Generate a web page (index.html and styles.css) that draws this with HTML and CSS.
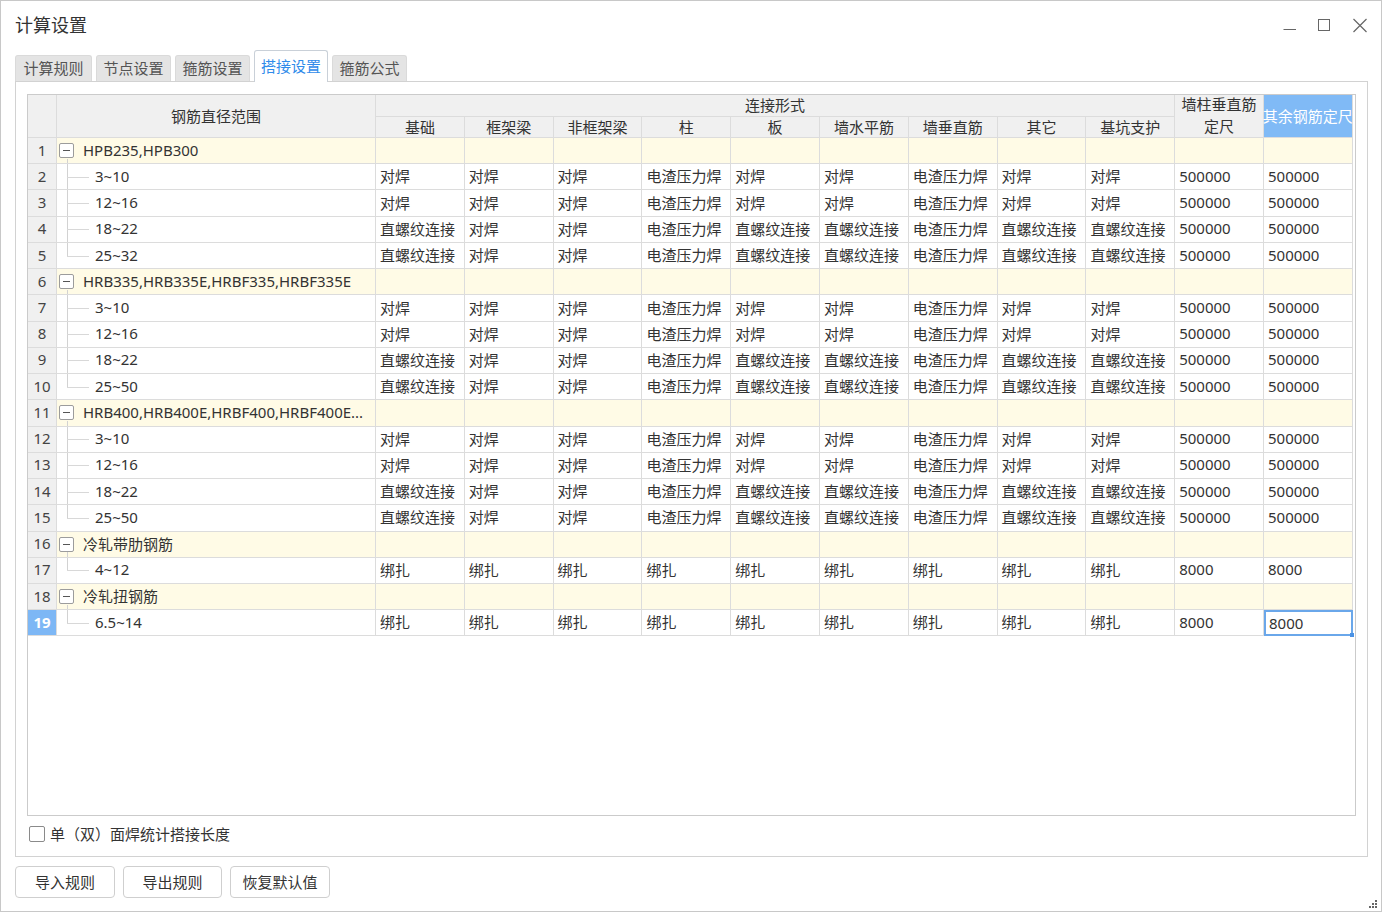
FILE: index.html
```html
<!DOCTYPE html>
<html lang="zh-CN">
<head>
<meta charset="utf-8">
<title>计算设置</title>
<link rel="stylesheet" href="styles.css">
</head>
<body>
<div class="window">
  <div class="titlebar">
    <div class="title">计算设置</div>
    <div class="controls">
      <svg class="ctl" width="16" height="16" viewBox="0 0 16 16"><line x1="1.5" y1="11.5" x2="14" y2="11.5" stroke="#666" stroke-width="1"/></svg>
      <svg class="ctl" width="16" height="16" viewBox="0 0 16 16"><rect x="1.5" y="1.5" width="11" height="11" fill="none" stroke="#666" stroke-width="1"/></svg>
      <svg class="ctl" width="16" height="16" viewBox="0 0 16 16"><path d="M1.5 1 L14.5 14 M14.5 1 L1.5 14" stroke="#666" stroke-width="1.2" fill="none"/></svg>
    </div>
  </div>
  <div class="tabs">
    <div class="tab w77">计算规则</div>
    <div class="tab w75">节点设置</div>
    <div class="tab w75">箍筋设置</div>
    <div class="tab on w74">搭接设置</div>
    <div class="tab w75">箍筋公式</div>
  </div>
  <div class="panel">
    <div class="grid">
      <div class="c h hn"></div>
      <div class="c h hname">钢筋直径范围</div>
      <div class="c h hgrp">连接形式</div>
      <div class="c h hw"><span>墙柱垂直筋</span><span>定尺</span></div>
      <div class="c h hs">其余钢筋定尺</div>
      <div class="c h">基础</div><div class="c h">框架梁</div><div class="c h">非框架梁</div><div class="c h">柱</div><div class="c h">板</div><div class="c h">墙水平筋</div><div class="c h">墙垂直筋</div><div class="c h">其它</div><div class="c h">基坑支护</div>

      <div class="c n">1</div><div class="c g nm gp"><i class="tb"></i>HPB235,HPB300</div><div class="c g"></div><div class="c g"></div><div class="c g"></div><div class="c g"></div><div class="c g"></div><div class="c g"></div><div class="c g"></div><div class="c g"></div><div class="c g"></div><div class="c g"></div><div class="c g"></div>
      <div class="c n">2</div><div class="c nm ch">3~10</div><div class="c">对焊</div><div class="c">对焊</div><div class="c">对焊</div><div class="c">电渣压力焊</div><div class="c">对焊</div><div class="c">对焊</div><div class="c">电渣压力焊</div><div class="c">对焊</div><div class="c">对焊</div><div class="c">500000</div><div class="c">500000</div>
      <div class="c n">3</div><div class="c nm ch">12~16</div><div class="c">对焊</div><div class="c">对焊</div><div class="c">对焊</div><div class="c">电渣压力焊</div><div class="c">对焊</div><div class="c">对焊</div><div class="c">电渣压力焊</div><div class="c">对焊</div><div class="c">对焊</div><div class="c">500000</div><div class="c">500000</div>
      <div class="c n">4</div><div class="c nm ch">18~22</div><div class="c">直螺纹连接</div><div class="c">对焊</div><div class="c">对焊</div><div class="c">电渣压力焊</div><div class="c">直螺纹连接</div><div class="c">直螺纹连接</div><div class="c">电渣压力焊</div><div class="c">直螺纹连接</div><div class="c">直螺纹连接</div><div class="c">500000</div><div class="c">500000</div>
      <div class="c n">5</div><div class="c nm ch last">25~32</div><div class="c">直螺纹连接</div><div class="c">对焊</div><div class="c">对焊</div><div class="c">电渣压力焊</div><div class="c">直螺纹连接</div><div class="c">直螺纹连接</div><div class="c">电渣压力焊</div><div class="c">直螺纹连接</div><div class="c">直螺纹连接</div><div class="c">500000</div><div class="c">500000</div>

      <div class="c n">6</div><div class="c g nm gp"><i class="tb"></i>HRB335,HRB335E,HRBF335,HRBF335E</div><div class="c g"></div><div class="c g"></div><div class="c g"></div><div class="c g"></div><div class="c g"></div><div class="c g"></div><div class="c g"></div><div class="c g"></div><div class="c g"></div><div class="c g"></div><div class="c g"></div>
      <div class="c n">7</div><div class="c nm ch">3~10</div><div class="c">对焊</div><div class="c">对焊</div><div class="c">对焊</div><div class="c">电渣压力焊</div><div class="c">对焊</div><div class="c">对焊</div><div class="c">电渣压力焊</div><div class="c">对焊</div><div class="c">对焊</div><div class="c">500000</div><div class="c">500000</div>
      <div class="c n">8</div><div class="c nm ch">12~16</div><div class="c">对焊</div><div class="c">对焊</div><div class="c">对焊</div><div class="c">电渣压力焊</div><div class="c">对焊</div><div class="c">对焊</div><div class="c">电渣压力焊</div><div class="c">对焊</div><div class="c">对焊</div><div class="c">500000</div><div class="c">500000</div>
      <div class="c n">9</div><div class="c nm ch">18~22</div><div class="c">直螺纹连接</div><div class="c">对焊</div><div class="c">对焊</div><div class="c">电渣压力焊</div><div class="c">直螺纹连接</div><div class="c">直螺纹连接</div><div class="c">电渣压力焊</div><div class="c">直螺纹连接</div><div class="c">直螺纹连接</div><div class="c">500000</div><div class="c">500000</div>
      <div class="c n">10</div><div class="c nm ch last">25~50</div><div class="c">直螺纹连接</div><div class="c">对焊</div><div class="c">对焊</div><div class="c">电渣压力焊</div><div class="c">直螺纹连接</div><div class="c">直螺纹连接</div><div class="c">电渣压力焊</div><div class="c">直螺纹连接</div><div class="c">直螺纹连接</div><div class="c">500000</div><div class="c">500000</div>

      <div class="c n">11</div><div class="c g nm gp"><i class="tb"></i>HRB400,HRB400E,HRBF400,HRBF400E...</div><div class="c g"></div><div class="c g"></div><div class="c g"></div><div class="c g"></div><div class="c g"></div><div class="c g"></div><div class="c g"></div><div class="c g"></div><div class="c g"></div><div class="c g"></div><div class="c g"></div>
      <div class="c n">12</div><div class="c nm ch">3~10</div><div class="c">对焊</div><div class="c">对焊</div><div class="c">对焊</div><div class="c">电渣压力焊</div><div class="c">对焊</div><div class="c">对焊</div><div class="c">电渣压力焊</div><div class="c">对焊</div><div class="c">对焊</div><div class="c">500000</div><div class="c">500000</div>
      <div class="c n">13</div><div class="c nm ch">12~16</div><div class="c">对焊</div><div class="c">对焊</div><div class="c">对焊</div><div class="c">电渣压力焊</div><div class="c">对焊</div><div class="c">对焊</div><div class="c">电渣压力焊</div><div class="c">对焊</div><div class="c">对焊</div><div class="c">500000</div><div class="c">500000</div>
      <div class="c n">14</div><div class="c nm ch">18~22</div><div class="c">直螺纹连接</div><div class="c">对焊</div><div class="c">对焊</div><div class="c">电渣压力焊</div><div class="c">直螺纹连接</div><div class="c">直螺纹连接</div><div class="c">电渣压力焊</div><div class="c">直螺纹连接</div><div class="c">直螺纹连接</div><div class="c">500000</div><div class="c">500000</div>
      <div class="c n">15</div><div class="c nm ch last">25~50</div><div class="c">直螺纹连接</div><div class="c">对焊</div><div class="c">对焊</div><div class="c">电渣压力焊</div><div class="c">直螺纹连接</div><div class="c">直螺纹连接</div><div class="c">电渣压力焊</div><div class="c">直螺纹连接</div><div class="c">直螺纹连接</div><div class="c">500000</div><div class="c">500000</div>

      <div class="c n">16</div><div class="c g nm gp"><i class="tb"></i>冷轧带肋钢筋</div><div class="c g"></div><div class="c g"></div><div class="c g"></div><div class="c g"></div><div class="c g"></div><div class="c g"></div><div class="c g"></div><div class="c g"></div><div class="c g"></div><div class="c g"></div><div class="c g"></div>
      <div class="c n">17</div><div class="c nm ch last">4~12</div><div class="c">绑扎</div><div class="c">绑扎</div><div class="c">绑扎</div><div class="c">绑扎</div><div class="c">绑扎</div><div class="c">绑扎</div><div class="c">绑扎</div><div class="c">绑扎</div><div class="c">绑扎</div><div class="c">8000</div><div class="c">8000</div>

      <div class="c n">18</div><div class="c g nm gp"><i class="tb"></i>冷轧扭钢筋</div><div class="c g"></div><div class="c g"></div><div class="c g"></div><div class="c g"></div><div class="c g"></div><div class="c g"></div><div class="c g"></div><div class="c g"></div><div class="c g"></div><div class="c g"></div><div class="c g"></div>
      <div class="c n sel">19</div><div class="c nm ch last">6.5~14</div><div class="c">绑扎</div><div class="c">绑扎</div><div class="c">绑扎</div><div class="c">绑扎</div><div class="c">绑扎</div><div class="c">绑扎</div><div class="c">绑扎</div><div class="c">绑扎</div><div class="c">绑扎</div><div class="c">8000</div><div class="c cur">8000<i class="handle"></i></div>
    </div>
    <label class="check"><span class="box"></span><span>单（双）面焊统计搭接长度</span></label>
  </div>
  <div class="buttons">
    <button class="btn w100">导入规则</button>
    <button class="btn w99">导出规则</button>
    <button class="btn w100">恢复默认值</button>
  </div>
  <div class="grip">
    <i style="grid-area:1/3"></i>
    <i style="grid-area:2/2"></i><i style="grid-area:2/3"></i>
    <i style="grid-area:3/1"></i><i style="grid-area:3/2"></i><i style="grid-area:3/3"></i>
  </div>
</div>
</body>
</html>
```

FILE: styles.css
```css
* { box-sizing: border-box; }
html, body { margin: 0; padding: 0; background: #fff; }
body {
  font-family: "Noto Sans", "Noto Sans CJK SC", sans-serif;
  font-size: 15px;
  color: #333;
}
.window {
  width: 1382px;
  height: 912px;
  border: 1px solid #c8c8c8;
  display: flex;
  flex-direction: column;
  position: relative;
  background: #fff;
}
.titlebar {
  height: 49px;
  display: flex;
  align-items: center;
  justify-content: space-between;
  padding: 0 13px 0 14px;
}
.title { font-size: 18px; color: #333; margin-top: -3px; }
.controls { display: flex; gap: 19px; align-items: center; }
.ctl { display: block; }

.tabs {
  height: 31px;
  display: flex;
  align-items: flex-end;
  gap: 4px;
  padding-left: 14px;
  position: relative;
  z-index: 1;
}
.tab {
  height: 26px;
  background: #e4e4e4;
  border: 1px solid #dadada;
  border-bottom: none;
  border-radius: 3px 3px 0 0;
  color: #555;
  display: flex;
  align-items: center;
  justify-content: center;
  padding-bottom: 3px;
}
.tab.on {
  height: 32px;
  margin-bottom: -1px;
  background: #fff;
  color: #2f8bea;
  border-color: #c9d0d8;
  padding-bottom: 3px;
}
.w77 { width: 77px; }
.w75 { width: 75px; }
.w74 { width: 74px; }

.panel {
  margin-left: 14px;
  width: 1353px;
  height: 776px;
  border: 1px solid #d2d2d2;
  padding: 12px 0 0 11px;
}
.grid {
  width: 1329px;
  height: 722px;
  border: 1px solid #cbcbcb;
  display: grid;
  grid-template-columns: 29px 319px repeat(11, 88.8px);
  grid-template-rows: 22px 21px repeat(19, 26.24px);
  align-content: start;
  background: #fff;
}
.c {
  border-right: 1px solid #dcdcdc;
  border-bottom: 1px solid #dcdcdc;
  display: flex;
  align-items: center;
  padding-left: 4px;
  padding-bottom: 2px;
  white-space: nowrap;
  overflow: hidden;
  min-width: 0;
  position: relative;
}
.h {
  background: #f0f0f0;
  justify-content: center;
  padding: 0 0 2px 0;
  color: #333;
}
.hn { grid-column: 1; grid-row: 1 / 3; }
.hname { grid-column: 2; grid-row: 1 / 3; }
.hgrp { grid-column: 3 / 12; grid-row: 1; }
.hw { grid-column: 12; grid-row: 1 / 3; flex-direction: column; line-height: 22px; }
.hs { grid-column: 13; grid-row: 1 / 3; background: #80baf6; color: #fff; overflow: visible; }
.n {
  background: #f0f0f0;
  justify-content: center;
  padding: 0 0 2px 0;
  color: #444;
}
.n.sel { background: #7db7f5; color: #fff; font-weight: 700; }
.g { background: #fffbe6; }

.nm { padding-left: 2px; }
.gp .tb {
  width: 15px;
  height: 15px;
  border: 1px solid #9c9c9c;
  border-radius: 2px;
  margin-right: 9px;
  position: relative;
  background: #fff;
  flex: none;
  top: 1px;
}
.gp .tb::after {
  content: "";
  position: absolute;
  left: 3px;
  right: 3px;
  top: 6px;
  height: 1px;
  background: #555;
}
.gp::after {
  content: "";
  position: absolute;
  left: 10px;
  width: 1px;
  top: calc(50% + 8px);
  bottom: -1px;
  background: #d2d2d2;
}
.ch { padding-left: 38px; }
.ch::before {
  content: "";
  position: absolute;
  left: 10px;
  width: 1px;
  top: 0;
  bottom: -1px;
  background: #d2d2d2;
}
.ch.last::before { bottom: 50%; }
.ch::after {
  content: "";
  position: absolute;
  left: 10px;
  width: 22px;
  top: 50%;
  height: 1px;
  background: #d8d8d8;
}
.cur {
  border: 2px solid #6aa7ea;
  padding-left: 3px;
  padding-bottom: 1px;
  overflow: visible;
}
.cur .handle {
  position: absolute;
  right: -3px;
  bottom: -3px;
  width: 4px;
  height: 4px;
  background: #4b92e4;
}

.check {
  display: flex;
  align-items: center;
  margin-top: 10px;
  margin-left: 2px;
  height: 16px;
  gap: 5px;
}
.check .box {
  width: 16px;
  height: 16px;
  border: 1px solid #8a8a8a;
  border-radius: 2px;
  background: #fff;
}
.check span:last-child { position: relative; top: -1px; }

.buttons {
  display: flex;
  gap: 8px;
  padding-left: 14px;
  margin-top: 9px;
}
.btn {
  height: 32px;
  border: 1px solid #cfcfcf;
  border-radius: 4px;
  background: #fff;
  font-family: "Noto Sans", "Noto Sans CJK SC", sans-serif;
  font-size: 15px;
  color: #333;
  padding: 0 0 2px 0;
}
.w100 { width: 100px; }
.w99 { width: 99px; }

.grip {
  position: absolute;
  right: 4px;
  bottom: 3px;
  display: grid;
  grid-template-columns: repeat(3, 2px);
  grid-template-rows: repeat(3, 2px);
  gap: 1px;
}
.grip i { display: block; width: 2px; height: 2px; background: #666; }
```
